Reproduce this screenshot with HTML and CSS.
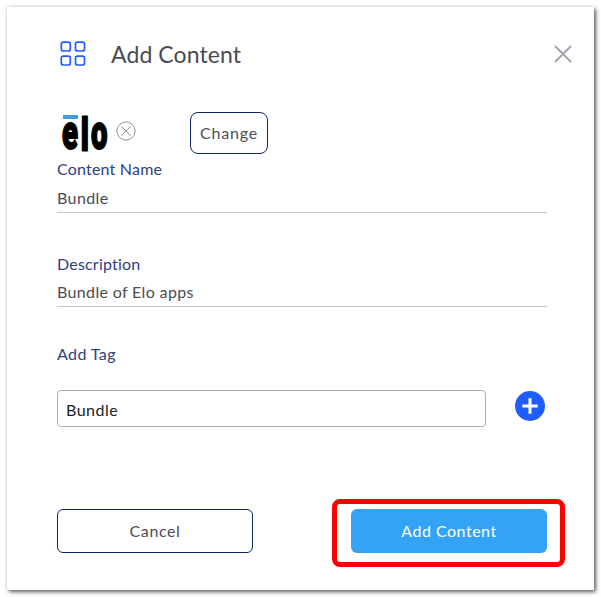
FILE: index.html
```html
<!DOCTYPE html>
<html lang="en">
<head>
<meta charset="utf-8">
<title>Add Content</title>
<link rel="stylesheet" href="styles.css">
</head>
<body>
<main class="dialog">
  <header class="header">
    <svg class="apps" width="26" height="26" viewBox="0 0 26 26" fill="none" stroke="#1f5dff" stroke-width="1.7"><rect x="1.3" y="1.2" width="9" height="8.8" rx="2"/><rect x="15.5" y="1.2" width="9" height="8.8" rx="2"/><rect x="1.3" y="15.2" width="9" height="8.8" rx="2"/><rect x="15.5" y="15.2" width="9" height="8.8" rx="2"/></svg>
    <h1 class="title">Add Content</h1>
    <svg class="close" width="18" height="18" viewBox="0 0 18 18" stroke="#a3a6b0" stroke-width="2"><path d="M1 1L17 17M17 1L1 17"/></svg>
  </header>
  <div class="media">
    <svg class="logo" width="46" height="38" viewBox="0 0 46 38">
      <rect x="1" y="0" width="15" height="4" fill="#3c9fdf"/>
      <g transform="scale(.6 1)" font-family="Roboto, sans-serif" font-weight="900" fill="#000" stroke="#000" stroke-linejoin="miter"><text x="0" y="34.2" font-size="49" stroke-width="1.8">e</text><text x="32" y="34.5" font-size="43.5" stroke-width="3">l</text><text x="48.5" y="34.2" font-size="49" stroke-width="1.8">o</text></g>
    </svg>
    <svg class="remove" width="20" height="20" viewBox="0 0 20 20" fill="none" stroke="#8c8f99"><circle cx="10" cy="10" r="9.1"/><path d="M5.3 5.3L14.7 14.7M14.7 5.3L5.3 14.7"/></svg>
    <button class="button change">Change</button>
  </div>
  <section class="field">
    <div class="label name-label">Content Name</div>
    <div class="value name-value">Bundle</div>
  </section>
  <section class="field description">
    <div class="label description-label">Description</div>
    <div class="value description-value">Bundle of Elo apps</div>
  </section>
  <div class="label tag-label">Add Tag</div>
  <div class="tag-row">
    <div class="tag-input">Bundle</div>
    <svg class="plus" width="30" height="30" viewBox="0 0 30 30"><circle cx="15" cy="15" r="15" fill="#1f5dff"/><path d="M15 7.3V22.7M7.3 15H22.7" stroke="#fff" stroke-width="3"/></svg>
  </div>
  <footer class="footer">
    <button class="button cancel">Cancel</button>
    <div class="submit-wrap"><button class="button submit">Add Content</button></div>
  </footer>
</main>
</body>
</html>
```
FILE: styles.css
```css
* { box-sizing: border-box; }
body { margin: 0; padding: 7px; background: #fff; font-family: Lato, "Liberation Sans", sans-serif; font-size: 16px; color: #4b4c52; overflow: hidden; }
.dialog { width: 587px; height: 583px; padding: 0 47px 0 50px; background: #fff; box-shadow: 2px 2px 4px rgba(0,0,0,.6), 0 0 4px rgba(0,0,0,.12); }
.header { display: flex; align-items: center; height: 94px; margin-right: -24.5px; padding-left: 3px; }
.title { flex: 1; margin: 0 0 0 25px; font-size: 23px; font-weight: 400; letter-spacing: .1px; line-height: 30px; }
.media { display: flex; align-items: flex-start; height: 52px; padding-top: 11px; }
.logo { margin: 3px 0 0 5px; overflow: visible; }
.remove { margin: 9px 0 0 8px; }
.button { border: 1px solid #12246b; border-radius: 6px; background: #fff; color: #4d4e56; font: inherit; padding: 0; line-height: 20px; }
.change { width: 78px; height: 42px; margin-left: 54px; letter-spacing: .8px; border-radius: 8px; }
.field { width: 490px; height: 60px; padding-top: 6px; border-bottom: 1px solid #c3c4cf; }
.label { height: 20px; color: #2c4084; line-height: 20px; }
.value { line-height: 20px; }
.name-label { letter-spacing: .2px; }
.name-value { margin-top: 9px; letter-spacing: .4px; }
.description { height: 53px; margin-top: 41px; padding-top: 0; }
.description-label { letter-spacing: .2px; }
.description-value { margin-top: 8px; letter-spacing: .35px; }
.tag-label { margin-top: 37px; letter-spacing: .4px; }
.tag-row { display: flex; align-items: center; justify-content: space-between; width: 488px; height: 37px; margin-top: 26px; }
.tag-input { width: 429px; height: 37px; padding: 9px 8px; border: 1px solid #b0b0b3; border-radius: 4px; color: #202124; line-height: 20px; letter-spacing: .5px; }
.plus { margin-bottom: 5px; }
.footer { display: flex; justify-content: space-between; align-items: flex-start; width: 508px; margin-top: 72px; }
.cancel { width: 196px; height: 44px; margin-top: 10px; letter-spacing: .6px; }
.submit-wrap { width: 233px; height: 68px; padding: 5px 0 0 14px; border: 5px solid #f00; border-radius: 8px; }
.submit { display: block; width: 196px; height: 44px; border: 0; background: #34a3f5; color: #fff; letter-spacing: .5px; }
```
